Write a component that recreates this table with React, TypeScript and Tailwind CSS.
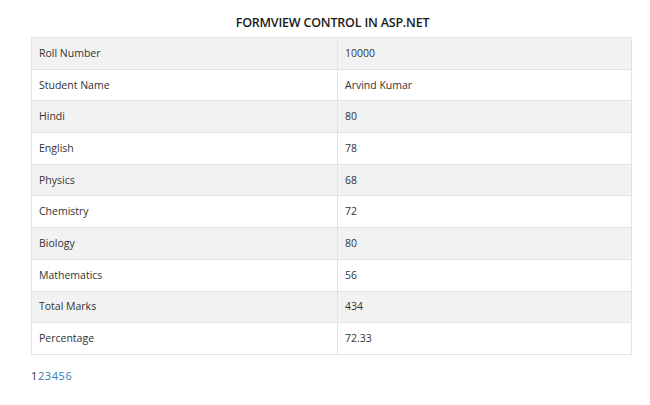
const rows: [string, string][] = [
  ["Roll Number", "10000"],
  ["Student Name", "Arvind Kumar"],
  ["Hindi", "80"],
  ["English", "78"],
  ["Physics", "68"],
  ["Chemistry", "72"],
  ["Biology", "80"],
  ["Mathematics", "56"],
  ["Total Marks", "434"],
  ["Percentage", "72.33"],
];

export default function App() {
  return (
    <div className="w-[650px] h-[405px] bg-white text-[#333] font-['Open_Sans',sans-serif]">
      <div className="pl-[31px] pr-[18px] pt-[14px]">
        <h2 className="text-center text-[12.5px] leading-[18px] font-semibold tracking-[-0.2px] text-[#1a1a1a] pl-[2px] mb-[5px]">
          FORMVIEW CONTROL IN ASP.NET
        </h2>
        <table className="w-[601px] border-collapse border border-[#ddd] text-[10.5px]">
          <tbody>
            {rows.map(([k, v], i) => (
              <tr key={k} className={i % 2 === 0 ? "bg-[#f2f2f2]" : "bg-white"}>
                <td className="w-[306px] h-[31.7px] border border-[#e3e3e3] px-[7px] pt-[1px] align-middle">{k}</td>
                <td className="h-[31.7px] border border-[#e3e3e3] px-[7px] pt-[1px] align-middle">{v}</td>
              </tr>
            ))}
          </tbody>
        </table>
        <div className="mt-[14px] text-[11px] leading-[14px] tracking-[0.6px]">
          <span className="text-[#333]">1</span>
          {["2", "3", "4", "5", "6"].map((n) => (
            <a key={n} href="#" className="text-[#337ab7]">
              {n}
            </a>
          ))}
        </div>
      </div>
    </div>
  );
}
